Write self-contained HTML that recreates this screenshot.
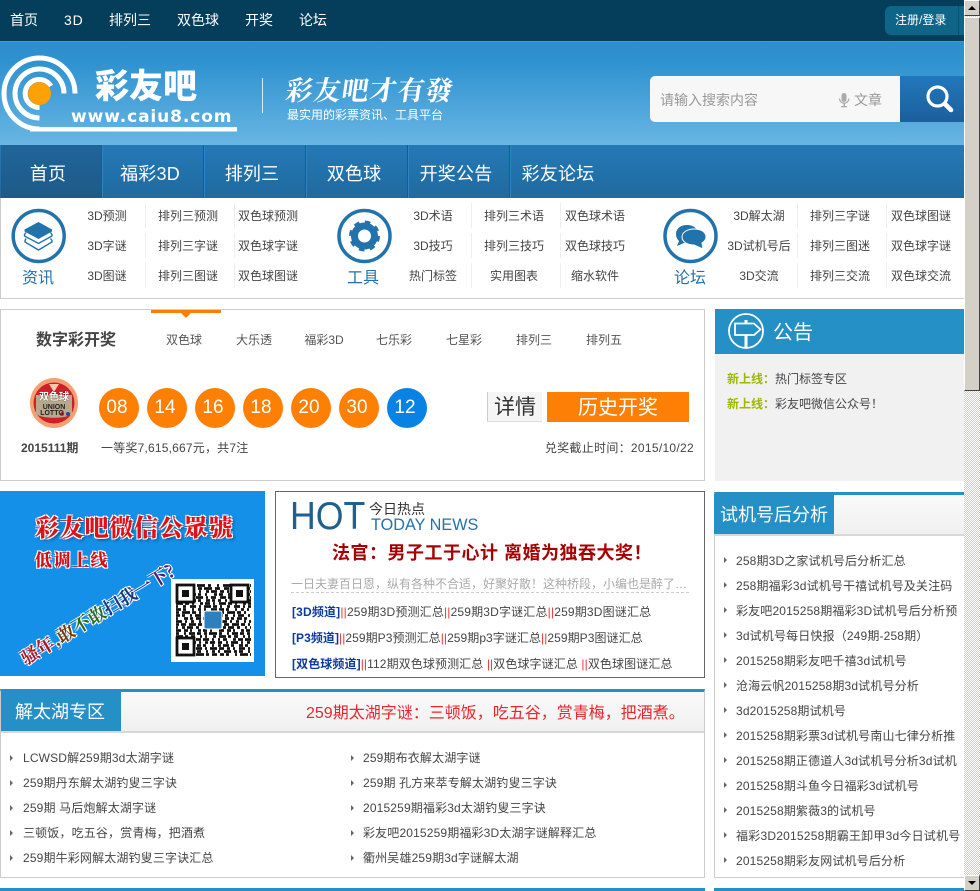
<!DOCTYPE html>
<html lang="zh"><head><meta charset="utf-8"><title>彩友吧</title>
<style>
html,body{margin:0;padding:0;width:980px;height:891px;overflow:hidden;background:#fff}
body{position:relative;font-family:"Liberation Sans","Noto Sans CJK SC",sans-serif;font-size:12px;color:#444}
div,span.a,a{box-sizing:border-box}
.b{position:absolute}
.t{position:absolute;white-space:nowrap;line-height:20px;height:20px}
.c{transform:translateX(-50%)}
.w{color:#fff}
.n{font-size:14px;color:#fff;top:10px}
.m{font-size:18px;color:#fff;top:164px;line-height:20px;letter-spacing:.2px}
.s{color:#444}
.sep{position:absolute;width:1px;height:25px;background:#eee}
.tab{color:#555;top:330px}
.ball{position:absolute;top:388px;width:40px;height:40px;border-radius:50%;background:#fd8005;color:#fff;font-size:19px;line-height:40px;text-align:center;padding-right:4px}
.q{color:#e33}
.l{color:#0b3a9e;font-weight:bold}
.r{color:#444}
.red{color:#e8262c}
.li{color:#444;letter-spacing:.15px}
.h{font-size:12px;color:#444;left:291px}
</style></head><body>

<!-- backgrounds -->
<div class="b" style="left:0;top:0;width:964px;height:41px;background:#043e5b"></div>
<div class="b" style="left:0;top:41px;width:964px;height:104px;background:linear-gradient(#2c8ecd 0,#2f92d0 20%,#69b6e3 100%);border-top:1px solid #3c9bd1"></div>
<div class="b" style="left:0;top:145px;width:964px;height:53px;background:linear-gradient(#2479b7,#206a9f)"></div>
<div class="b" style="left:1px;top:145px;width:100px;height:53px;background:linear-gradient(#20659a,#1d5a88)"></div>
<div class="b" style="left:101px;top:145px;width:1px;height:53px;background:#1a5a8c"></div><div class="b" style="left:102px;top:145px;width:1px;height:53px;background:#2c86c6"></div>
<div class="b" style="left:203px;top:145px;width:1px;height:53px;background:#1a5a8c"></div><div class="b" style="left:204px;top:145px;width:1px;height:53px;background:#2c86c6"></div>
<div class="b" style="left:305px;top:145px;width:1px;height:53px;background:#1a5a8c"></div><div class="b" style="left:306px;top:145px;width:1px;height:53px;background:#2c86c6"></div>
<div class="b" style="left:407px;top:145px;width:1px;height:53px;background:#1a5a8c"></div><div class="b" style="left:408px;top:145px;width:1px;height:53px;background:#2c86c6"></div>
<div class="b" style="left:509px;top:145px;width:1px;height:53px;background:#1a5a8c"></div><div class="b" style="left:510px;top:145px;width:1px;height:53px;background:#2c86c6"></div>
<div class="b" style="left:0;top:198px;width:964px;height:101px;border-left:1px solid #ccc;border-bottom:1px solid #ccc"></div>

<!-- login -->
<div class="b" style="left:885px;top:6px;width:79px;height:29px;background:#0f6587;border-radius:6px 0 0 6px"></div>
<div class="b" style="left:958px;top:6px;width:1px;height:29px;background:#0a4f70"></div>

<!-- search -->
<div class="b" style="left:650px;top:76px;width:250px;height:46px;background:#f7f7f7;border-radius:5px 0 0 5px"></div>
<div class="b" style="left:900px;top:76px;width:64px;height:46px;background:linear-gradient(#2178bc,#1c5f9c)"></div>

<!-- panels -->
<div class="b" style="left:0;top:309px;width:705px;height:172px;border:1px solid #ccc"></div>
<div class="b" style="left:151px;top:310px;width:70px;height:3px;background:#fd8005"></div>
<div class="b" style="left:715px;top:309px;width:249px;height:45px;background:#2490c5"></div>
<div class="b" style="left:715px;top:354px;width:249px;height:127px;background:#f1f1f1"></div>
<div class="b" style="left:0;top:491px;width:265px;height:185px;background:#1490e8"></div>
<div class="b" style="left:275px;top:491px;width:430px;height:187px;border:1px solid #666"></div>
<div class="b" style="left:291px;top:592px;width:398px;height:0;border-top:1px dashed #ccc"></div>

<div class="b" style="left:0;top:689px;width:705px;height:189px;border:1px solid #ccc;border-top:3px solid #2490c5"></div>
<div class="b" style="left:1px;top:692px;width:703px;height:41px;background:linear-gradient(#fafafa,#f0f0f0);border-bottom:2px solid #d8d8d8"></div>
<div class="b" style="left:1px;top:691px;width:120px;height:40px;background:#2490c5"></div>
<div class="b" style="left:714px;top:492px;width:250px;height:386px;border:1px solid #ccc;border-top:3px solid #2490c5;border-right:0"></div>
<div class="b" style="left:715px;top:495px;width:249px;height:41px;background:linear-gradient(#fafafa,#f0f0f0);border-bottom:2px solid #d8d8d8"></div>
<div class="b" style="left:714px;top:494px;width:120px;height:40px;background:#2490c5"></div>
<div class="b" style="left:0;top:888px;width:705px;height:3px;background:#2490c5"></div>
<div class="b" style="left:714px;top:888px;width:250px;height:3px;background:#2490c5"></div>

<!-- all vector shapes -->
<svg class="b" style="left:0;top:0" width="980" height="891" viewBox="0 0 980 891" xmlns="http://www.w3.org/2000/svg">
<!-- logo -->
<g fill="none" stroke="#fff" stroke-width="5">
<path d="M75 93.500A35.500 35.500 0 1 0 39.500 129"/>
<path d="M64 93.500A24.500 24.500 0 1 0 39.500 118"/>
<path d="M51 86A14 14 0 1 0 39.500 107.500"/>
</g>
<path d="M30 129.300H237" stroke="#fff" stroke-width="4.400"/>
<circle cx="39.500" cy="93.500" r="11.500" fill="#ffa005"/>
<path d="M262.500 78V113" stroke="#d8ecf8" stroke-width="1"/>
<!-- mic -->
<g fill="#aaa"><rect x="841.500" y="93" width="5" height="9" rx="2.500"/><rect x="843.500" y="103" width="1.500" height="3"/><rect x="841" y="106" width="6" height="1.300"/></g>
<path d="M839.500 98.500a4.700 4.700 0 0 0 9.400 0" fill="none" stroke="#aaa" stroke-width="1.200"/>
<!-- search -->
<circle cx="937.500" cy="96.500" r="9.500" fill="none" stroke="#fff" stroke-width="3.200"/>
<path d="M945 104L951 110" stroke="#fff" stroke-width="4.600" stroke-linecap="round"/>
<!-- icons -->
<g fill="none" stroke="#2272ab" stroke-width="3.500"><circle cx="38.700" cy="236" r="25.500"/><circle cx="364.500" cy="236" r="25.500"/><circle cx="690.500" cy="236" r="25.500"/></g>
<path d="M38.500 222L52 229.500V231.500L38.500 239L24.500 231.500V229.500Z" fill="#2272ab"/>
<path d="M26 232.500L24.500 234.500V236L38.500 243.500L52 236V234.500L50.500 232.500" fill="none" stroke="#2272ab" stroke-width="1.400"/>
<path d="M26 238.500L25 240.500V242L38.500 250L52 242V240.500L50.500 238.500" fill="none" stroke="#2272ab" stroke-width="1.400"/>
<circle cx="364.500" cy="236" r="10" fill="none" stroke="#2272ab" stroke-width="7"/>
<circle cx="364.500" cy="236" r="13" fill="none" stroke="#2272ab" stroke-width="5" stroke-dasharray="5.100 5.100"/>
<path d="M687 225C680 225 676 229 676 234C676 237 677 239 679 241L677 246L684 243C691 244 698 240 698 234C698 229 694 225 687 225Z" fill="#2272ab"/>
<path d="M694 229C688 229 682 232 682 237C682 242 688 245 694 245L703 249L702 243C705 241 706 239 706 237C706 232 701 229 694 229Z" fill="#2272ab" stroke="#fff" stroke-width="1"/>
<!-- tab triangle -->
<path d="M181 313H191L186 318Z" fill="#fd8005"/>
<!-- lotto badge -->
<ellipse cx="54" cy="403" rx="24" ry="25" fill="#f6a071"/>
<circle cx="54" cy="403" r="20.500" fill="#cf2028"/>
<path d="M36 395H72V414C66 419 42 419 36 414Z" fill="#b9a98c"/>
<path d="M49 384h10l-5 8Z" fill="#f7c9b0"/>
<circle cx="62" cy="414" r="2" fill="#d8232a"/><circle cx="68" cy="414" r="2" fill="#234a9c"/>
<!-- notice icon -->
<circle cx="746" cy="331" r="17" fill="none" stroke="#fff" stroke-width="1.800"/>
<path d="M735 323.500H754L760.500 329.500L754 335H735Z" fill="none" stroke="#fff" stroke-width="1.800"/>
<path d="M746 320V323M746 335V348" stroke="#fff" stroke-width="3"/>
<!-- QR -->
<rect x="171" y="579" width="83" height="83" fill="#fff"/>
<g stroke="#111" stroke-width="2.800" fill="none">
<path d="M176 585.500H251" stroke-dasharray="3 2 6 3 2 5 8 3 3 6 2 4 9 4"/>
<path d="M176 588.500H251" stroke-dasharray="5 3 2 6 3 3 4 2 8 3 5 4"/>
<path d="M176 591.500H251" stroke-dasharray="2 3 7 2 3 6 2 5 3 2 6 3 4 3"/>
<path d="M176 594.500H251" stroke-dasharray="4 5 3 2 6 2 3 4 2 7 3 2"/>
<path d="M176 597.500H251" stroke-dasharray="6 2 3 3 2 4 7 3 2 3 5 4"/>
<path d="M176 600.500H251" stroke-dasharray="3 4 2 3 8 2 3 5 4 2 3 3"/>
<path d="M176 603.500H251" stroke-dasharray="7 2 4 3 2 6 3 2 5 3 2 4"/>
<path d="M176 606.500H251" stroke-dasharray="2 5 3 4 6 3 2 3 7 2 4 3"/>
<path d="M176 609.500H251" stroke-dasharray="5 2 3 6 2 4 3 3 2 5 6 2"/>
<path d="M176 612.500H251" stroke-dasharray="3 3 8 2 4 3 2 6 3 2 4 5"/>
<path d="M176 615.500H251" stroke-dasharray="4 2 3 5 2 3 6 4 2 3 7 2"/>
<path d="M176 618.500H251" stroke-dasharray="2 6 4 2 3 3 5 2 3 6 2 3"/>
<path d="M176 621.500H251" stroke-dasharray="6 3 2 4 3 5 2 3 8 2 3 4"/>
<path d="M176 624.500H251" stroke-dasharray="3 2 5 3 7 2 4 3 2 4 3 5"/>
<path d="M176 627.500H251" stroke-dasharray="2 4 3 2 6 3 3 5 2 3 6 2"/>
<path d="M176 630.500H251" stroke-dasharray="5 3 4 2 2 6 3 2 4 3 2 7"/>
<path d="M176 633.500H251" stroke-dasharray="3 5 2 3 6 2 4 3 3 2 8 2"/>
<path d="M176 636.500H251" stroke-dasharray="7 2 3 3 4 5 2 3 2 6 3 3"/>
<path d="M176 639.500H251" stroke-dasharray="2 3 4 6 3 2 5 2 6 3 2 4"/>
<path d="M176 642.500H251" stroke-dasharray="4 4 2 3 7 3 2 4 3 2 5 3"/>
<path d="M176 645.500H251" stroke-dasharray="3 2 6 2 3 5 4 2 3 6 2 4"/>
<path d="M176 648.500H251" stroke-dasharray="5 3 3 3 2 4 6 3 2 3 7 2"/>
<path d="M176 651.500H251" stroke-dasharray="2 4 7 3 3 2 4 5 2 4 3 3"/>
<path d="M176 654.500H251" stroke-dasharray="4 2 3 6 2 3 8 2 3 3 5 3"/>
</g>
<g fill="#fff" stroke="#111" stroke-width="2.800">
<rect x="177" y="585" width="17" height="17"/><rect x="231" y="585" width="17" height="17"/><rect x="177" y="638" width="17" height="17"/>
</g>
<g fill="#111"><rect x="182" y="590" width="7" height="7"/><rect x="236" y="590" width="7" height="7"/><rect x="182" y="643" width="7" height="7"/></g>
<rect x="204" y="611" width="18" height="18" rx="2" fill="#2d80bd" stroke="#fff" stroke-width="1"/>
<!-- bullets -->
<g fill="#666">
<path d="M10 755l3 3l-3 3ZM10 780l3 3l-3 3ZM10 805l3 3l-3 3ZM10 830l3 3l-3 3ZM10 855l3 3l-3 3Z"/>
<path d="M351 755l3 3l-3 3ZM351 780l3 3l-3 3ZM351 805l3 3l-3 3ZM351 830l3 3l-3 3ZM351 855l3 3l-3 3Z"/>
<path d="M724 557l3 3l-3 3ZM724 582l3 3l-3 3ZM724 607l3 3l-3 3ZM724 632l3 3l-3 3ZM724 657l3 3l-3 3ZM724 682l3 3l-3 3ZM724 707l3 3l-3 3ZM724 732l3 3l-3 3ZM724 757l3 3l-3 3ZM724 782l3 3l-3 3ZM724 807l3 3l-3 3ZM724 832l3 3l-3 3ZM724 857l3 3l-3 3Z"/>
</g>
</svg>

<!-- top nav -->
<div class="t n" style="left:10px">首页</div>
<div class="t n" style="left:64px;letter-spacing:.8px">3D</div>
<div class="t n" style="left:109px">排列三</div>
<div class="t n" style="left:177px">双色球</div>
<div class="t n" style="left:245px">开奖</div>
<div class="t n" style="left:299px">论坛</div>
<div class="t w" style="left:895px;top:10px">注册/登录</div>

<!-- logo text -->
<div class="t w" style="left:95px;top:77px;font-size:34px;font-weight:900;letter-spacing:0;">彩友吧</div>
<div class="t w" style="left:71px;top:107px;font-family:'DejaVu Sans',sans-serif;font-size:17px;font-weight:bold;letter-spacing:.9px">www.caiu8.com</div>
<div class="t w" style="left:286px;top:79px;font-family:'Noto Serif CJK SC',serif;font-size:27px;font-weight:bold;letter-spacing:1px;transform:skewX(-8deg);transform-origin:left">彩友吧才有發</div>
<div class="t w" style="left:287px;top:105px">最实用的彩票资讯、工具平台</div>
<div class="t" style="left:660px;top:90px;font-size:14px;color:#999">请输入搜索内容</div>
<div class="t" style="left:854px;top:90px;font-size:14px;color:#999">文章</div>

<!-- main nav -->
<div class="t m c" style="left:48px">首页</div>
<div class="t m c" style="left:150px">福彩3D</div>
<div class="t m c" style="left:252px">排列三</div>
<div class="t m c" style="left:354px">双色球</div>
<div class="t m c" style="left:456px">开奖公告</div>
<div class="t m c" style="left:558px">彩友论坛</div>

<!-- sub nav -->
<div class="sep" style="left:145px;top:203px"></div><div class="sep" style="left:145px;top:233px"></div><div class="sep" style="left:145px;top:263px"></div>
<div class="sep" style="left:234px;top:203px"></div><div class="sep" style="left:234px;top:233px"></div><div class="sep" style="left:234px;top:263px"></div>
<div class="sep" style="left:471px;top:203px"></div><div class="sep" style="left:471px;top:233px"></div><div class="sep" style="left:471px;top:263px"></div>
<div class="sep" style="left:560px;top:203px"></div><div class="sep" style="left:560px;top:233px"></div><div class="sep" style="left:560px;top:263px"></div>
<div class="sep" style="left:797px;top:203px"></div><div class="sep" style="left:797px;top:233px"></div><div class="sep" style="left:797px;top:263px"></div>
<div class="sep" style="left:886px;top:203px"></div><div class="sep" style="left:886px;top:233px"></div><div class="sep" style="left:886px;top:263px"></div>

<div class="t s c" style="left:107px;top:206px">3D预测</div><div class="t s c" style="left:188px;top:206px">排列三预测</div><div class="t s c" style="left:268px;top:206px">双色球预测</div>
<div class="t s c" style="left:107px;top:236px">3D字谜</div><div class="t s c" style="left:188px;top:236px">排列三字谜</div><div class="t s c" style="left:268px;top:236px">双色球字谜</div>
<div class="t s c" style="left:107px;top:266px">3D图谜</div><div class="t s c" style="left:188px;top:266px">排列三图谜</div><div class="t s c" style="left:268px;top:266px">双色球图谜</div>
<div class="t s c" style="left:433px;top:206px">3D术语</div><div class="t s c" style="left:514px;top:206px">排列三术语</div><div class="t s c" style="left:595px;top:206px">双色球术语</div>
<div class="t s c" style="left:433px;top:236px">3D技巧</div><div class="t s c" style="left:514px;top:236px">排列三技巧</div><div class="t s c" style="left:595px;top:236px">双色球技巧</div>
<div class="t s c" style="left:433px;top:266px">热门标签</div><div class="t s c" style="left:514px;top:266px">实用图表</div><div class="t s c" style="left:595px;top:266px">缩水软件</div>
<div class="t s c" style="left:759px;top:206px">3D解太湖</div><div class="t s c" style="left:840px;top:206px">排列三字谜</div><div class="t s c" style="left:921px;top:206px">双色球图谜</div>
<div class="t s c" style="left:759px;top:236px">3D试机号后</div><div class="t s c" style="left:840px;top:236px">排列三图迷</div><div class="t s c" style="left:921px;top:236px">双色球字谜</div>
<div class="t s c" style="left:759px;top:266px">3D交流</div><div class="t s c" style="left:840px;top:266px">排列三交流</div><div class="t s c" style="left:921px;top:266px">双色球交流</div>
<div class="t c" style="left:38px;top:269px;font-size:16px;color:#2272ab">资讯</div>
<div class="t c" style="left:363px;top:269px;font-size:16px;color:#2272ab">工具</div>
<div class="t c" style="left:690px;top:269px;font-size:16px;color:#2272ab">论坛</div>

<!-- lottery -->
<div class="t" style="left:36px;top:331px;font-size:16px;font-weight:bold;color:#444">数字彩开奖</div>
<div class="t tab c" style="left:184px">双色球</div><div class="t tab c" style="left:254px">大乐透</div><div class="t tab c" style="left:324px">福彩3D</div><div class="t tab c" style="left:394px">七乐彩</div><div class="t tab c" style="left:464px">七星彩</div><div class="t tab c" style="left:534px">排列三</div><div class="t tab c" style="left:604px">排列五</div>
<div class="t c" style="left:54px;top:388px;font-size:10px;font-weight:bold;color:#fff;text-shadow:0 0 1px #000">双色球</div>
<div class="t c" style="left:54px;top:398px;font-size:7px;font-weight:bold;color:#222">UNION</div>
<div class="t c" style="left:52px;top:404px;font-size:7px;font-weight:bold;color:#222">LOTTO</div>
<div class="ball" style="left:99px">08</div><div class="ball" style="left:147px">14</div><div class="ball" style="left:195px">16</div><div class="ball" style="left:243px">18</div><div class="ball" style="left:291px">20</div><div class="ball" style="left:339px">30</div><div class="ball" style="left:387px;background:#0a82e4">12</div>
<div class="b" style="left:487px;top:392px;width:55px;height:30px;background:#f5f5f5;border-left:1px solid #ccc;border-bottom:1px solid #ddd;font-size:21px;line-height:32px;text-align:center;color:#333">详情</div>
<div class="b" style="left:547px;top:392px;width:142px;height:30px;background:#fd8005;font-size:20px;line-height:32px;text-align:center;color:#fff">历史开奖</div>
<div class="t" style="left:21px;top:438px;font-weight:bold">2015111期</div>
<div class="t" style="left:101px;top:438px;letter-spacing:.2px">一等奖7,615,667元，共7注</div>
<div class="t" style="right:286px;top:438px;letter-spacing:.3px">兑奖截止时间：2015/10/22</div>

<!-- notice -->
<div class="t w" style="left:773px;top:323px;font-size:20px">公告</div>
<div class="t" style="left:727px;top:369px"><b style="color:#9db800">新上线：</b>热门标签专区</div>
<div class="t" style="left:727px;top:394px"><b style="color:#9db800">新上线：</b>彩友吧微信公众号！</div>

<!-- banner text -->
<div class="t" style="left:35px;top:516px;font-family:'Noto Serif CJK SC',serif;font-size:24px;font-weight:900;letter-spacing:.8px;color:#e0101a;text-shadow:1px 1px 0 #fff,-1px -1px 0 #fff,1px -1px 0 #fff,-1px 1px 0 #fff,2px 2px 3px #06487a">彩友吧微信公眾號</div>
<div class="t" style="left:35px;top:549px;font-family:'Noto Serif CJK SC',serif;font-size:17px;font-weight:900;letter-spacing:1.500px;color:#d01018;text-shadow:1px 1px 0 #fff,-1px -1px 0 #fff,1px -1px 0 #fff,-1px 1px 0 #fff">低调上线</div>
<div class="t" style="left:9px;top:603px;width:180px;font-family:'Noto Serif CJK SC',serif;font-size:18px;font-weight:bold;transform:rotate(-31deg);text-shadow:1px 1px 0 #fff,-1px -1px 0 #fff,1px -1px 0 #fff,-1px 1px 0 #fff"><span style="color:#a01830">骚年</span><span style="color:#6a3a10">,敢</span><span style="color:#2a6a2a">不敢</span><span style="color:#153a80">扫我</span><span style="color:#402080">一下?</span></div>

<!-- hot -->
<div class="t" style="left:290px;top:507px;font-size:39px;color:#1f6090;transform:scaleX(.915);transform-origin:left">HOT</div>
<div class="t" style="left:369px;top:499px;font-size:14px;color:#333">今日热点</div>
<div class="t" style="left:371px;top:515px;font-size:17px;color:#2272ab;transform:scaleX(.955);transform-origin:left">TODAY NEWS</div>
<div class="t" style="left:332px;top:543px;font-size:18px;font-weight:bold;color:#a80000;letter-spacing:.5px">法官：男子工于心计 离婚为独吞大奖！</div>
<div class="t" style="left:291px;top:574px;color:#aaa">一日夫妻百日恩，纵有各种不合适，好聚好散！这种桥段，小编也是醉了…</div>
<div class="t h" style="top:602px;left:292px;letter-spacing:.17px"><span class="l">[3D频道]</span><span class="q">||</span>259期3D预测汇总<span class="q">||</span>259期3D字谜汇总<span class="q">||</span>259期3D图谜汇总</div>
<div class="t h" style="top:628px;left:292px;letter-spacing:.06px"><span class="l">[P3频道]</span><span class="q">||</span>259期P3预测汇总<span class="q">||</span>259期p3字谜汇总<span class="q">||</span>259期P3图谜汇总</div>
<div class="t h" style="top:654px;left:292px;letter-spacing:.1px"><span class="l">[双色球频道]</span><span class="q">||</span>112期双色球预测汇总 <span class="q">||</span>双色球字谜汇总 <span class="q">||</span>双色球图谜汇总</div>

<!-- taihu -->
<div class="t w" style="left:15px;top:702px;font-size:18px">解太湖专区</div>
<div class="t red" style="left:306px;top:704px;font-size:16px">259期太湖字谜：三顿饭，吃五谷，赏青梅，把酒煮。</div>
<div class="t li" style="left:23px;top:748px">LCWSD解259期3d太湖字谜</div>
<div class="t li" style="left:23px;top:773px">259期丹东解太湖钓叟三字诀</div>
<div class="t li" style="left:23px;top:798px">259期 马后炮解太湖字谜</div>
<div class="t li" style="left:23px;top:823px">三顿饭，吃五谷，赏青梅，把酒煮</div>
<div class="t li" style="left:23px;top:848px">259期牛彩网解太湖钓叟三字诀汇总</div>
<div class="t li" style="left:363px;top:748px">259期布衣解太湖字谜</div>
<div class="t li" style="left:363px;top:773px">259期 孔方来萃专解太湖钓叟三字诀</div>
<div class="t li" style="left:363px;top:798px">2015259期福彩3d太湖钓叟三字诀</div>
<div class="t li" style="left:363px;top:823px">彩友吧2015259期福彩3D太湖字谜解释汇总</div>
<div class="t li" style="left:363px;top:848px">衢州吴雄259期3d字谜解太湖</div>

<!-- right list -->
<div class="t w" style="left:720px;top:505px;font-size:18px">试机号后分析</div>
<div class="t li" style="left:736px;top:551px">258期3D之家试机号后分析汇总</div>
<div class="t li" style="left:736px;top:576px">258期福彩3d试机号干禧试机号及关注码</div>
<div class="t li" style="left:736px;top:601px">彩友吧2015258期福彩3D试机号后分析预</div>
<div class="t li" style="left:736px;top:626px">3d试机号每日快报（249期-258期）</div>
<div class="t li" style="left:736px;top:651px">2015258期彩友吧千禧3d试机号</div>
<div class="t li" style="left:736px;top:676px">沧海云帆2015258期3d试机号分析</div>
<div class="t li" style="left:736px;top:701px">3d2015258期试机号</div>
<div class="t li" style="left:736px;top:726px">2015258期彩票3d试机号南山七律分析推</div>
<div class="t li" style="left:736px;top:751px">2015258期正德道人3d试机号分析3d试机</div>
<div class="t li" style="left:736px;top:776px">2015258期斗鱼今日福彩3d试机号</div>
<div class="t li" style="left:736px;top:801px">2015258期紫薇3的试机号</div>
<div class="t li" style="left:736px;top:826px;letter-spacing:.22px">福彩3D2015258期霸王卸甲3d今日试机号</div>
<div class="t li" style="left:736px;top:851px">2015258期彩友网试机号后分析</div>

<!-- scrollbar -->
<div class="b" style="left:964px;top:0;width:16px;height:891px;background-color:#fff;background-image:conic-gradient(#d4d0c8 25%,#fff 0 50%,#d4d0c8 0 75%,#fff 0);background-size:2px 2px"></div>
<div class="b" style="left:964px;top:0;width:16px;height:16px;background:#d4d0c8;border:1px solid;border-color:#fff #404040 #404040 #fff"></div>
<div class="b" style="left:968px;top:6px;width:0;height:0;border:4px solid transparent;border-top:0;border-bottom:4px solid #000"></div>
<div class="b" style="left:964px;top:17px;width:16px;height:374px;background:#d4d0c8;border:1px solid;border-color:#fff #404040 #404040 #fff"></div>
<div class="b" style="left:964px;top:875px;width:16px;height:16px;background:#d4d0c8;border:1px solid;border-color:#fff #404040 #404040 #fff"></div>
<div class="b" style="left:968px;top:881px;width:0;height:0;border:4px solid transparent;border-bottom:0;border-top:4px solid #000"></div>
</body></html>
